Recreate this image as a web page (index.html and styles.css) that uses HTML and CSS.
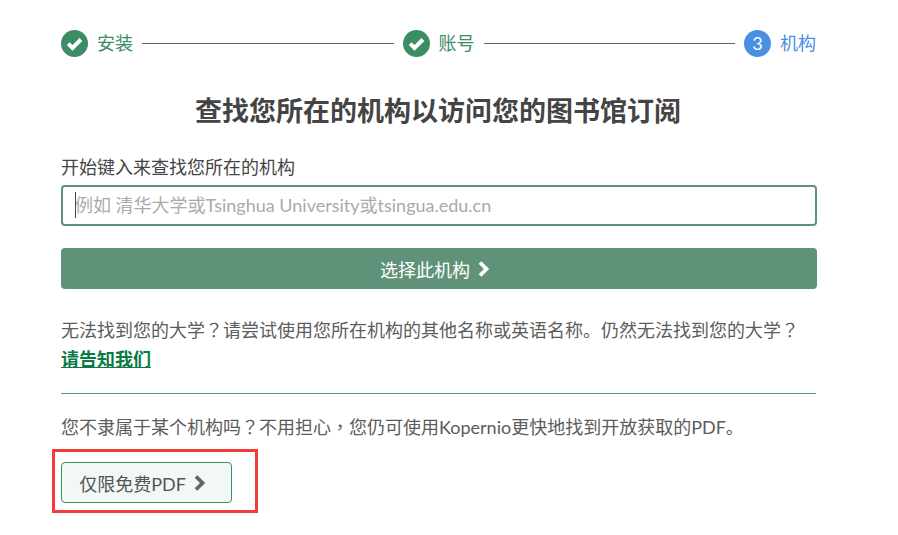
FILE: index.html
```html
<!DOCTYPE html>
<html lang="zh-cmn-Hans">
	<head>
		<meta charset="utf-8">
		<title>Kopernio</title>
		<link rel="stylesheet" href="styles.css">
	</head>
	<body>
		<div class="page">
			<div class="steps">
				<div class="step step-done">
					<svg class="step-icon" width="27" height="27" viewBox="0 0 27 27"><circle cx="13.5" cy="13.5" r="13.5" fill="#3c8c64"/><path d="M7.2 13.6l4.3 4.3 8.4-8.4" fill="none" stroke="#fff" stroke-width="4"/></svg>
					<span>安装</span>
				</div>
				<div class="step-line"></div>
				<div class="step step-done">
					<svg class="step-icon" width="27" height="27" viewBox="0 0 27 27"><circle cx="13.5" cy="13.5" r="13.5" fill="#3c8c64"/><path d="M7.2 13.6l4.3 4.3 8.4-8.4" fill="none" stroke="#fff" stroke-width="4"/></svg>
					<span>账号</span>
				</div>
				<div class="step-line"></div>
				<div class="step step-active">
					<div class="step-num">3</div>
					<span>机构</span>
				</div>
			</div>
			<h1>查找您所在的机构以访问您的图书馆订阅</h1>
			<label class="field-label" for="org">开始键入来查找您所在的机构</label>
			<div class="field">
				<input id="org" class="field-input" type="text" placeholder="例如 清华大学或Tsinghua University或tsingua.edu.cn">
				<div class="caret"></div>
			</div>
			<button class="btn btn-main">选择此机构<svg width="13" height="16" viewBox="0 0 13 16"><path d="M3 1.5l6.5 6.5-6.5 6.5" fill="none" stroke="#fff" stroke-width="3.8"/></svg></button>
			<p class="help">无法找到您的大学<span class="punct" lang="zh-TW">？</span>请尝试使用您所在机构的其他名称或英语名称。仍然无法找到您的大学<span class="punct" lang="zh-TW">？</span><br><a href="#">请告知我们</a></p>
			<hr>
			<p class="note">您不隶属于某个机构吗<span class="punct" lang="zh-TW">？</span>不用担心<span class="punct" lang="zh-TW">，</span>您仍可使用Kopernio更快地找到开放获取的PDF。</p>
		</div>
		<div class="mark">
			<button class="btn btn-free">仅限免费PDF<svg width="13" height="16" viewBox="0 0 13 16"><path d="M3 1.5l6.5 6.5-6.5 6.5" fill="none" stroke="#666" stroke-width="3.8"/></svg></button>
		</div>
	</body>
</html>
```

FILE: styles.css
```css
html,button,input{ font-family: Lato, "Noto Sans CJK SC", sans-serif; }
body{ margin: 0; color: #5c5c5c; font-size: 18px; background: #fff; }
.page{ width: 756px; margin-left: 61px; padding-top: 30px; }

.steps{ display: flex; align-items: center; height: 27px; margin-right: 1px; }
.step{ display: flex; align-items: center; gap: 9px; line-height: 27px; }
.step-done{ color: #3c8c64; }
.step-active{ color: #4a90e2; }
.step-icon{ display: block; }
.step-num{ width: 27px; height: 27px; border-radius: 50%; background: #4a90e2; color: #fff; text-align: center; font-size: 18px; line-height: 27px; }
.step-line{ flex: 1; height: 1px; margin: 0 9px; background: #666; }

h1{ margin: 34px 2px 0 0; color: #444; font-size: 27px; line-height: 40px; font-weight: 700; text-align: center; }

.field-label{ display: block; margin-top: 23px; color: #444; line-height: 26px; }
.field{ position: relative; margin-top: 5px; }
.field-input{ display: block; box-sizing: border-box; width: 100%; height: 41px; padding: 0 12px 2px; border: 2px solid #5f9279; border-radius: 4px; font-size: 18px; color: #444; outline: none; }
.field-input::placeholder{ color: #aaa; opacity: 1; }
.caret{ position: absolute; left: 14px; top: 7px; width: 1px; height: 26px; background: #444; }

.btn{ display: flex; align-items: center; justify-content: center; gap: 7px; height: 41px; border-radius: 4px; padding: 0 8px 0 0; font-size: 18px; }
.btn-main{ width: 100%; margin-top: 22px; border: 0; background: #5f9279; color: #fff; }
.btn-free{ width: 171px; border: 1px solid #3c8c64; background: #f2f8f6; color: #555; }

.punct{ font-family: "Noto Sans CJK TC", sans-serif; }
.help{ margin: 26px 0 0; line-height: 29px; }
.help a{ color: #0b7a45; font-weight: 700; text-decoration: underline; }
hr{ height: 1px; margin: 19px 1px 0 0; border: 0; background: #5f9279; }
.note{ margin: 17px 0 0; line-height: 30px; }

.mark{ box-sizing: border-box; width: 206px; height: 64px; margin: 7px 0 0 52px; padding: 10px 0 0 6px; border: 3px solid #f33b3b; }
```
